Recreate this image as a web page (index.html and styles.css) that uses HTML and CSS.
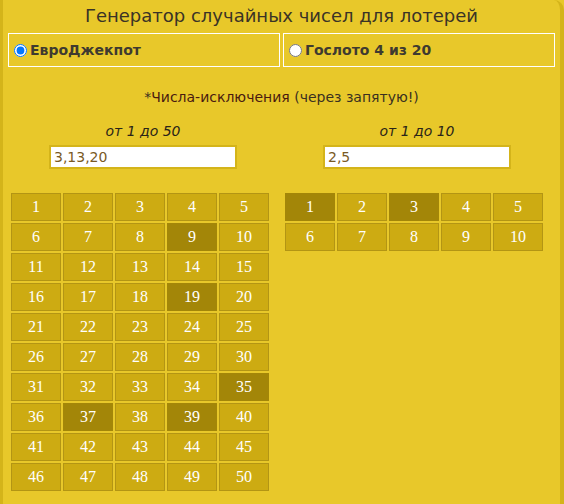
FILE: index.html
```html
<!DOCTYPE html>
<html lang="ru">
<head>
<meta charset="utf-8">
<title>Генератор случайных чисел для лотерей</title>
<link rel="stylesheet" href="styles.css">
</head>
<body>
<div class="panel">
  <h1 class="title">Генератор случайных чисел для лотерей</h1>
  <div class="tabs">
    <label class="tab"><input type="radio" name="lot" checked>ЕвроДжекпот</label>
    <label class="tab"><input type="radio" name="lot">Гослото 4 из 20</label>
  </div>
  <p class="notice">*<span class="hl">Числа-исключения</span> (через запятую!)</p>
  <div class="cols">
    <div class="col col-left">
      <div class="range">от 1 до 50</div>
      <input class="field" type="text" value="3,13,20">
      <div class="grid">
        <div class="cell">1</div><div class="cell">2</div><div class="cell">3</div><div class="cell">4</div><div class="cell">5</div>
        <div class="cell">6</div><div class="cell">7</div><div class="cell">8</div><div class="cell on">9</div><div class="cell">10</div>
        <div class="cell">11</div><div class="cell">12</div><div class="cell">13</div><div class="cell">14</div><div class="cell">15</div>
        <div class="cell">16</div><div class="cell">17</div><div class="cell">18</div><div class="cell on">19</div><div class="cell">20</div>
        <div class="cell">21</div><div class="cell">22</div><div class="cell">23</div><div class="cell">24</div><div class="cell">25</div>
        <div class="cell">26</div><div class="cell">27</div><div class="cell">28</div><div class="cell">29</div><div class="cell">30</div>
        <div class="cell">31</div><div class="cell">32</div><div class="cell">33</div><div class="cell">34</div><div class="cell on">35</div>
        <div class="cell">36</div><div class="cell on">37</div><div class="cell">38</div><div class="cell on">39</div><div class="cell">40</div>
        <div class="cell">41</div><div class="cell">42</div><div class="cell">43</div><div class="cell">44</div><div class="cell">45</div>
        <div class="cell">46</div><div class="cell">47</div><div class="cell">48</div><div class="cell">49</div><div class="cell">50</div>
      </div>
    </div>
    <div class="col col-right">
      <div class="range">от 1 до 10</div>
      <input class="field" type="text" value="2,5">
      <div class="grid">
        <div class="cell on">1</div><div class="cell">2</div><div class="cell on">3</div><div class="cell">4</div><div class="cell">5</div>
        <div class="cell">6</div><div class="cell">7</div><div class="cell">8</div><div class="cell">9</div><div class="cell">10</div>
      </div>
    </div>
  </div>
</div>
</body>
</html>
```

FILE: styles.css
```css
html, body {
  margin: 0;
  padding: 0;
  background: #e8c82a;
}
.panel {
  box-sizing: border-box;
  width: 564px;
  height: 504px;
  background: #e8c82a;
  border-left: 3px solid #d4b41a;
  border-right: 4px solid #d4b41a;
  border-top-right-radius: 10px;
  font-family: "DejaVu Sans", Verdana, sans-serif;
  color: #3a3020;
  overflow: hidden;
}
.title {
  margin: 0;
  padding-top: 5px;
  font-size: 18px;
  font-weight: normal;
  line-height: 22px;
  text-align: center;
  color: #3a3326;
}
.tabs {
  display: flex;
  gap: 3px;
  margin-top: 6px;
  padding-left: 5px;
}
.tab {
  box-sizing: border-box;
  width: 272px;
  height: 34px;
  border: 1px solid #ffffff;
  display: flex;
  align-items: center;
  font-size: 14px;
  font-weight: bold;
  color: #3e3a30;
}
.tab input {
  margin: 0 3px 0 5px;
  width: 13px;
  height: 13px;
}
.notice {
  margin: 21px 0 0;
  font-size: 14px;
  line-height: 18px;
  text-align: center;
  color: #3a3020;
}
.notice .hl {
  color: #4a1a10;
}
.cols {
  display: flex;
  padding-left: 3px;
  margin-top: 16px;
}
.col {
  width: 274px;
  display: flex;
  flex-direction: column;
  align-items: center;
}
.range {
  font-size: 14px;
  font-style: italic;
  line-height: 18px;
  color: #2a2418;
}
.field {
  box-sizing: border-box;
  width: 188px;
  height: 24px;
  margin-top: 5px;
  border: 2px solid #d4b41a;
  padding: 0 3px;
  background: #ffffff;
  font-family: "DejaVu Sans", Verdana, sans-serif;
  font-size: 14px;
  color: #7a5a24;
  outline: none;
}
.grid {
  align-self: flex-start;
  margin-left: 5px;
  margin-top: 24px;
  display: grid;
  grid-template-columns: repeat(5, 50px);
  grid-auto-rows: 28px;
  gap: 2px;
}
.cell {
  box-sizing: border-box;
  border: 1px solid #b39514;
  background: #cdab12;
  color: #ffffff;
  font-family: "Liberation Serif", "Times New Roman", serif;
  font-size: 16px;
  display: flex;
  align-items: center;
  justify-content: center;
}
.cell.on {
  background: #a38608;
  border-color: #a38608;
}
```
